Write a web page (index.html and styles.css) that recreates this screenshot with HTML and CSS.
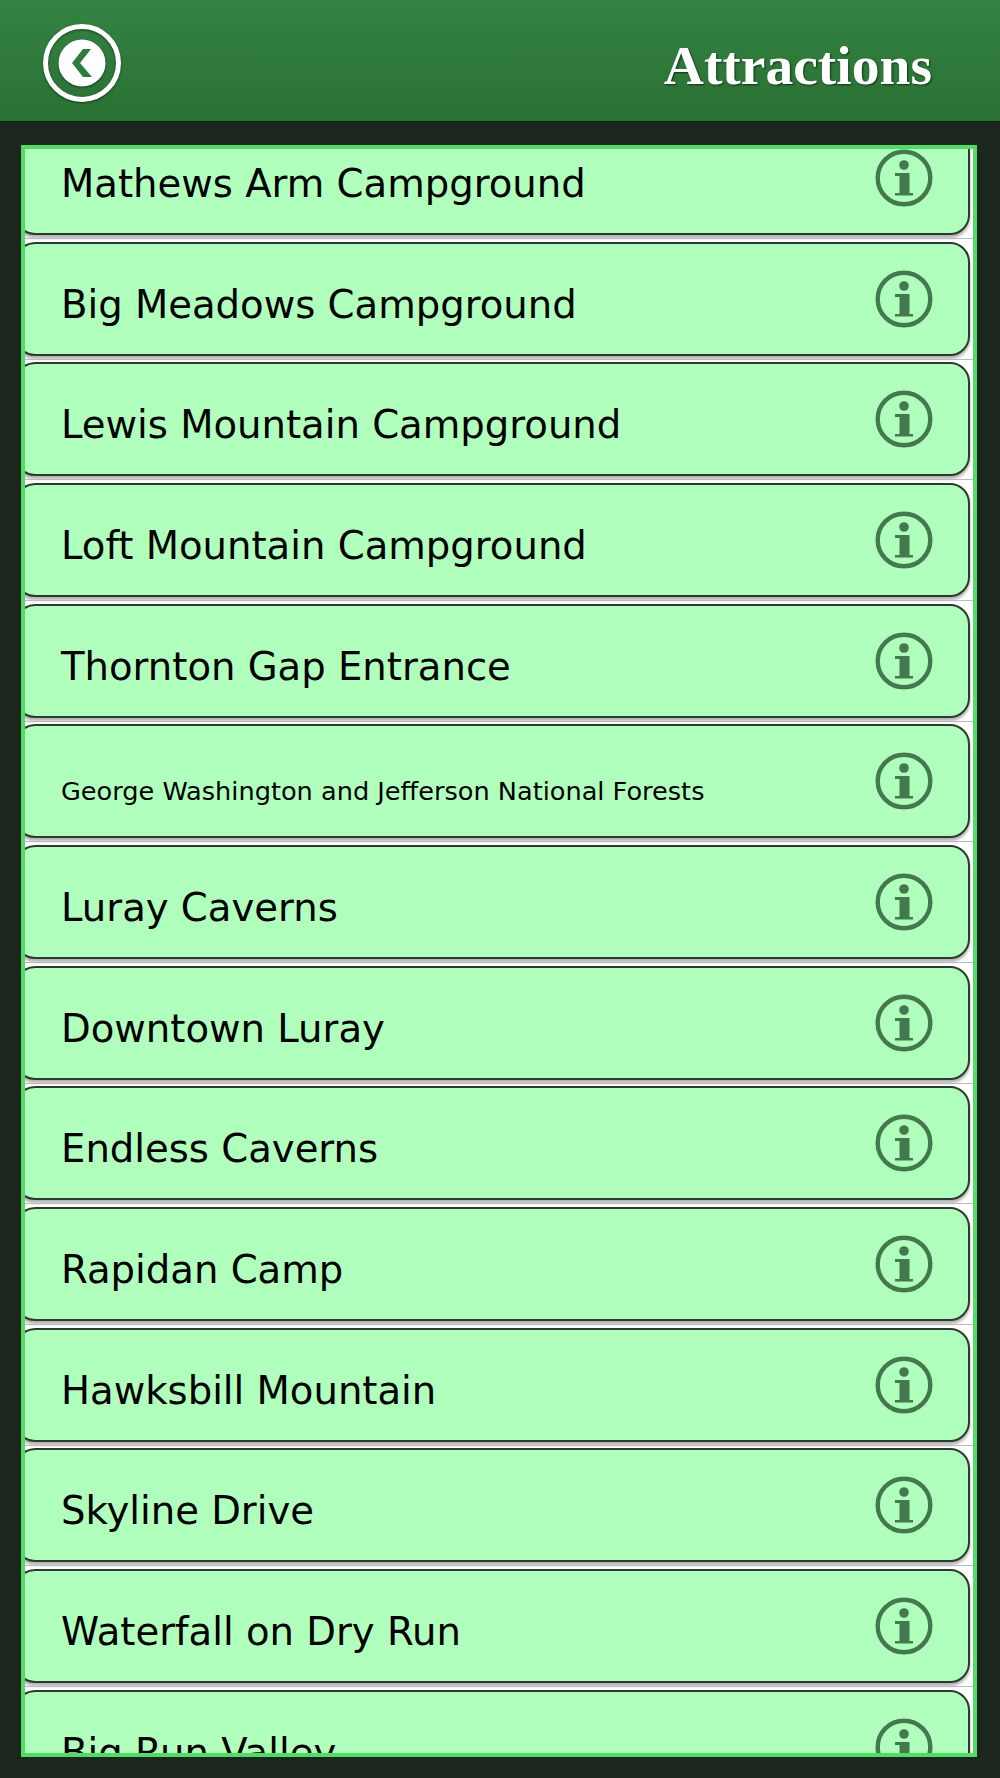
FILE: index.html
```html
<!DOCTYPE html>
<html lang="en">
<head>
    <meta charset="UTF-8">
    <meta name="viewport" content="width=device-width, initial-scale=1.0">
    <title>Attractions</title>
    <link rel="stylesheet" href="styles.css">
</head>
<body>

    <header class="topbar">
        <button class="back-btn" type="button" aria-label="Back">
            <svg viewBox="0 0 80 80" width="80" height="80">
                <circle cx="40" cy="40" r="36.500" fill="none" stroke="#fff" stroke-width="5"/>
                <circle cx="40" cy="40" r="23.500" fill="#fff"/>
                <path d="M41 26h8L38 40l12 14h-9L30 40z" fill="#2f7d3e"/>
            </svg>
        </button>
        <h1 class="title">Attractions</h1>
    </header>

    <main class="frame">
        <ul class="list">
            <li class="row"><span class="row-name">Mathews Arm Campground</span><svg class="info"><use href="#info"/></svg></li>
            <li class="row"><span class="row-name">Big Meadows Campground</span><svg class="info"><use href="#info"/></svg></li>
            <li class="row"><span class="row-name">Lewis Mountain Campground</span><svg class="info"><use href="#info"/></svg></li>
            <li class="row"><span class="row-name">Loft Mountain Campground</span><svg class="info"><use href="#info"/></svg></li>
            <li class="row"><span class="row-name">Thornton Gap Entrance</span><svg class="info"><use href="#info"/></svg></li>
            <li class="row"><span class="row-name small">George Washington and Jefferson National Forests</span><svg class="info"><use href="#info"/></svg></li>
            <li class="row"><span class="row-name">Luray Caverns</span><svg class="info"><use href="#info"/></svg></li>
            <li class="row"><span class="row-name">Downtown Luray</span><svg class="info"><use href="#info"/></svg></li>
            <li class="row"><span class="row-name">Endless Caverns</span><svg class="info"><use href="#info"/></svg></li>
            <li class="row"><span class="row-name">Rapidan Camp</span><svg class="info"><use href="#info"/></svg></li>
            <li class="row"><span class="row-name">Hawksbill Mountain</span><svg class="info"><use href="#info"/></svg></li>
            <li class="row"><span class="row-name">Skyline Drive</span><svg class="info"><use href="#info"/></svg></li>
            <li class="row"><span class="row-name">Waterfall on Dry Run</span><svg class="info"><use href="#info"/></svg></li>
            <li class="row"><span class="row-name">Big Run Valley</span><svg class="info"><use href="#info"/></svg></li>
        </ul>
    </main>

    <svg class="defs" width="0" height="0">
        <symbol id="info" viewBox="0 0 58 58">
            <circle cx="29" cy="29" r="26.300" fill="none" stroke="#44784f" stroke-width="4.400"/>
            <circle cx="29" cy="16" r="4.800" fill="#44784f"/>
            <path d="M20 24h14.500v20H38v2.500H20V44h4.500V27H20z" fill="#44784f"/>
        </symbol>
    </svg>

</body>
</html>
```

FILE: styles.css
```css
body {
    margin: 0;
    height: 1778px;
    overflow: hidden;
    background-color: #1b271c;
    font-family: 'DejaVu Sans', sans-serif;
}

.topbar {
    height: 122px;
    box-sizing: border-box;
    display: flex;
    align-items: center;
    justify-content: space-between;
    padding: 0 68px 0 42px;
    background: linear-gradient(#338443, #2a7033);
    border-bottom: 1px solid #10210f;
}

.back-btn {
    display: flex;
    margin-top: 4px;
    padding: 0;
    border: 0;
    background: none;
    filter: drop-shadow(0 1px 1px rgba(0, 0, 0, 0.5));
}

.title {
    margin: 9px 0 0;
    font-family: 'Liberation Serif', serif;
    font-size: 55.500px;
    font-weight: bold;
    color: #fff;
    text-shadow: 1px 1px 2px rgba(0, 0, 0, 0.6);
}

.frame {
    height: 1612px;
    box-sizing: border-box;
    margin: 23px 23px 0 21px;
    border: 4px solid #52dc66;
    background-color: #fff;
    overflow: hidden;
}

.list {
    list-style-type: none;
    margin: -28px 0 0 -10px;
    padding: 0;
    display: grid;
    grid-auto-rows: 120.67px;
}

.row {
    position: relative;
    height: 114px;
    box-sizing: border-box;
    margin-right: 3px;
    padding: 0 35px 0 44px;
    display: flex;
    align-items: center;
    justify-content: space-between;
    background-color: #b1ffbc;
    border: 2px solid #2d3a2f;
    border-radius: 20px;
    box-shadow: 0 3px 3px rgba(0, 0, 0, 0.3);
}

/* thin grey line between rows, runs past the card on both sides */
.row::after {
    content: '';
    position: absolute;
    left: 0;
    right: -6px;
    bottom: -6px;
    height: 1px;
    background-color: #bbb;
}

.row-name {
    font-size: 38.600px;
    color: #000;
    padding-top: 11px;
}

.row-name.small {
    font-size: 25.600px;
    padding-top: 20px;
}

.info {
    width: 58px;
    height: 58px;
}

.defs {
    position: absolute;
}
```
